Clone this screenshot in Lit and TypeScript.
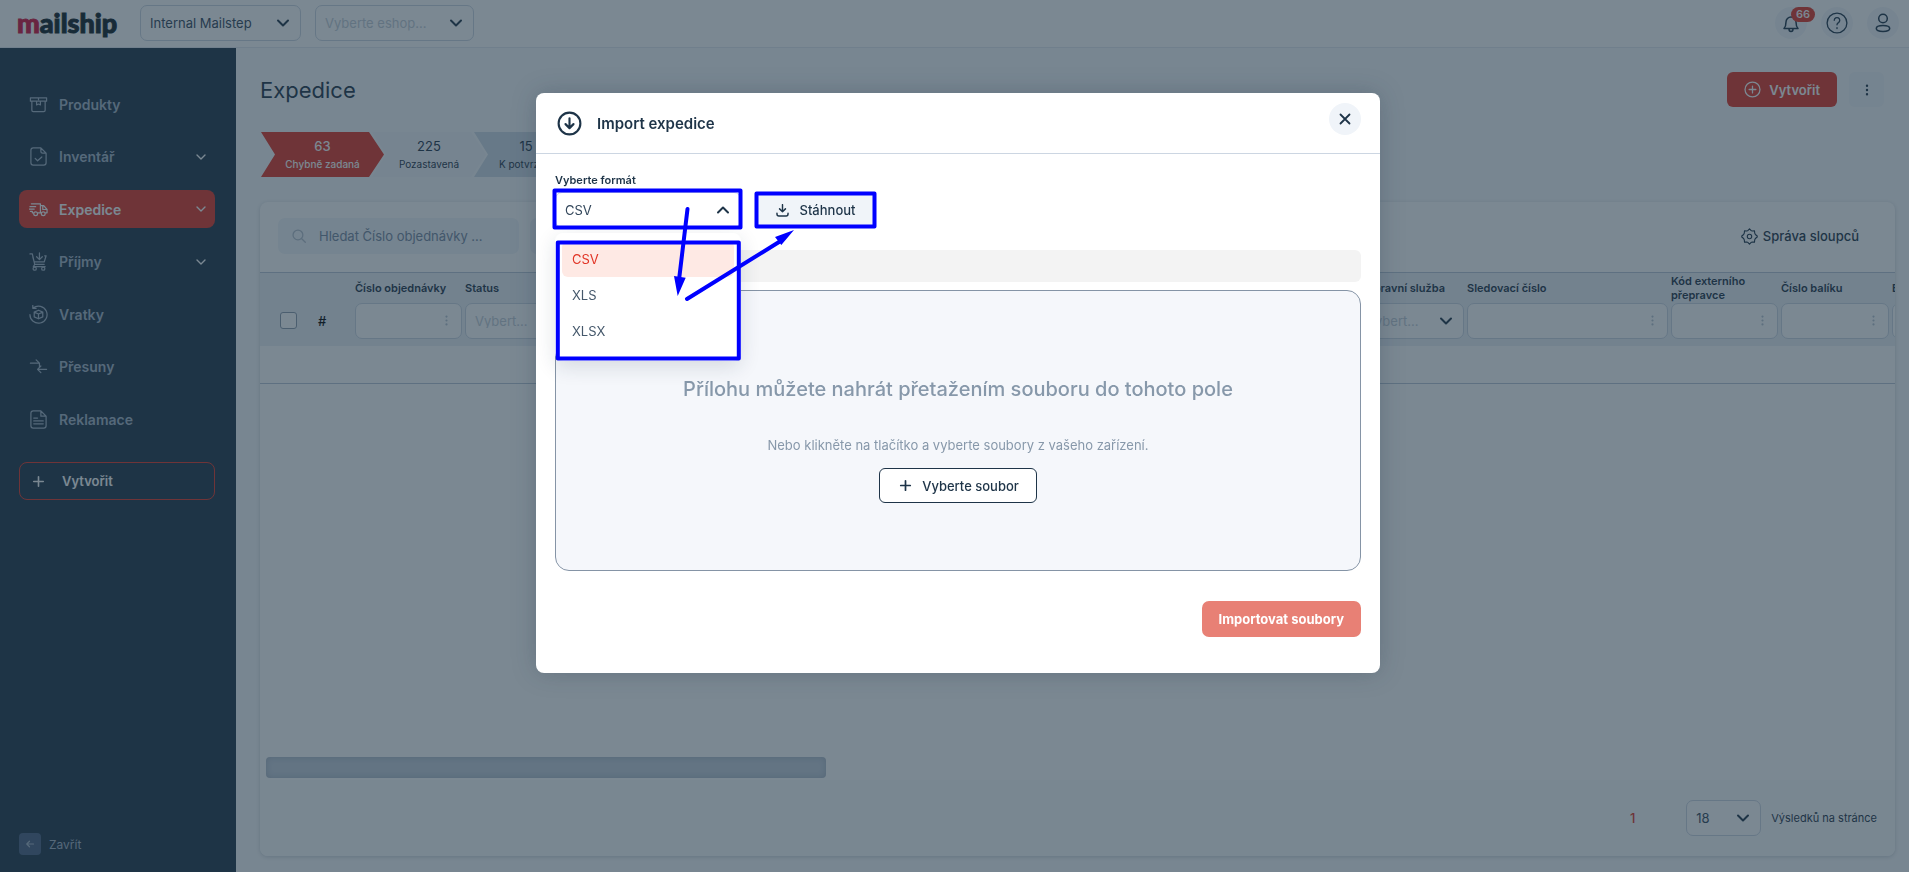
import { LitElement, html, css, svg, nothing } from "lit";
import { customElement, property } from "lit/decorators.js";
import { classMap } from "lit/directives/class-map.js";

const glyphs: Record<string, unknown> = {
  box: svg`<path d="M1.5 3h17v3.5h-17zM3 6.500v9.500a1.500 1.500 0 0 0 1.500 1.500h11a1.500 1.500 0 0 0 1.500-1.500V6.500M10 3v2M8 6.500v4l2-1 2 1v-4"/>`,
  check: svg`<path d="M12.500 1H4.500A2.500 2.500 0 0 0 2 3.500v13A2.500 2.500 0 0 0 4.500 19h11a2.500 2.500 0 0 0 2.500-2.500V6.500zM12.500 1v3.500a2 2 0 0 0 2 2H18M6.500 12l2.500 2.500 4.500-4"/>`,
  truck: svg`<path d="M2.500 4H12v9.500H9.500M12 6h3.500l3.500 4v3.500h-1.500M13 13.500h-1M1 7h6M.5 9.500h5M1.500 12h2v1.500h1M14.500 6v4H19"/><circle cx="7" cy="14.500" r="2"/><circle cx="15" cy="14.500" r="2"/>`,
  cart: svg`<path d="M1 2h2.500l2.500 11h10M4 5l1.500 5.500h10.500L18 4h-1.500M11 1v6.500M8 5l3 3 3-3M6 13l-1.500 2.500H17"/><circle cx="6" cy="17.500" r="1.700"/><circle cx="15" cy="17.500" r="1.700"/>`,
  returns: svg`<path d="M4.500 3A9 9 0 1 1 1 10M4 .5v3h3.500M10 5.500l4.500 2v5L10 14.500l-4.500-2v-5zM5.500 7.500L10 9.500l4.500-2M10 9.500v5"/>`,
  moves: svg`<path d="M1.500 6.500h9M7.500 3l3.500 3.500V10M18.500 13H9.500M12.500 9.500L9 13l3.500 3.500"/>`,
  doc: svg`<path d="M12.500 1H4.500A2.500 2.500 0 0 0 2 3.500v13A2.500 2.500 0 0 0 4.500 19h11a2.500 2.500 0 0 0 2.500-2.500V6.500zM12.500 1v5.500H18M5 8.500h4M5 11.500h10M5 14.500h10"/>`,
  down: svg`<path d="M5 7.500l5 5 5-5"/>`,
  up: svg`<path d="M5 12.500L10 7.500l5 5"/>`,
  plus: svg`<path d="M10 5v10M5 10h10"/>`,
  left: svg`<path d="M17 10H4M9 4.500L3.500 10 9 15.500"/>`,
  bell: svg`<path d="M3 15.500c1.500-1.500 2-3 2-6.500a5 5 0 0 1 10 0c0 3.500.5 5 2 6.500zM8 16a2 2.500 0 0 0 4 0"/>`,
  help: svg`<circle cx="10" cy="10" r="9"/><path d="M7.500 7.500a2.500 2.500 0 1 1 3.800 2.200c-.9.500-1.300 1-1.300 2M10 14.200v.8"/>`,
  user: svg`<circle cx="10" cy="5.500" r="4.300"/><ellipse cx="10" cy="15.500" rx="6.700" ry="2.900"/>`,
  dots: svg`<path d="M10 4v.01M10 10v.01M10 16v.01" stroke-width="3.400"/>`,
  addRound: svg`<circle cx="10" cy="10" r="8.800"/><path d="M10 6v8M6 10h8"/>`,
  search: svg`<circle cx="8.500" cy="8.500" r="7"/><path d="M13.500 13.500l5.500 5.500"/>`,
  gear: svg`<circle cx="10" cy="10" r="2.600"/><path d="M8.300 2.900L10 .9l1.700 2 1.600.7 2.600-.2.200 2.600.8 1.600 2.200 1.800v1.200l-2.200 1.800-.8 1.600-.2 2.600-2.600-.2-1.600.7L10 19.100l-1.700-2-1.600-.7-2.600.2-.2-2.600-.8-1.600-2.200-1.800V9.400l2.200-1.800.8-1.600.2-2.600 2.600.2z"/>`,
  import: svg`<circle cx="10" cy="10" r="8.700"/><path d="M10 5.800v7.500M6.800 10.500L10 13.700l3.200-3.200"/>`,
  close: svg`<path d="M5 5l10 10M15 5L5 15"/>`,
  download: svg`<path d="M10 1v11M5.500 7.500L10 12l4.500-4.500M1.500 14v1.500a3 3 0 0 0 3 3h11a3 3 0 0 0 3-3V14"/>`,
};

const icon = (name: string, size = 16, weight = 1.5) => html`<svg
  width=${size} height=${size} viewBox="0 0 20 20" fill="none" stroke="currentColor"
  stroke-width=${weight} stroke-linecap="round" stroke-linejoin="round" aria-hidden="true"
>${glyphs[name]}</svg>`;

const base = css`
  * { box-sizing: border-box; }
  :host { font-family: Inter, "Noto Sans", sans-serif; font-size: 13px; color: #1e3448; }
  svg { display: block; flex: none; }
  button, input, select { font: inherit; color: inherit; margin: 0; }
  button { cursor: pointer; }
`;

@customElement("ms-select")
class MsSelect extends LitElement {
  @property() label = "";
  @property() value = "";
  @property({ type: Boolean }) hint = false;
  @property({ type: Boolean }) open = false;
  static styles = [base, css`
    :host { display: block; }
    .wrap { display: grid; align-items: center; }
    .wrap > * { grid-area: 1 / 1; }
    select {
      appearance: none; width: 100%; height: 36px; padding: 0 30px 0 9px; background: #fff;
      border: 1px solid #ccd6e2; border-radius: 7px; text-overflow: ellipsis; outline: none;
      color: #33475b;
    }
    .hint { color: #c3ccd6; }
    .mark { justify-self: end; margin-right: 8px; pointer-events: none; }
  `];
  render() {
    return html`<div class="wrap">
      <select class=${classMap({ hint: this.hint })} aria-label=${this.label}><option>${this.value}</option></select>
      <span class="mark">${icon(this.open ? "up" : "down", 20, 2)}</span>
    </div>`;
  }
}

@customElement("ms-topbar")
class MsTopbar extends LitElement {
  static styles = [base, css`
    :host { display: flex; align-items: center; height: 48px; padding: 0 10px 1px 17px; background: #fff; border-bottom: 1px solid #e4e9f0; }
    .logo { width: 123px; font: 900 27px/38px Lato, sans-serif; -webkit-text-stroke: 1px; text-decoration: none; color: #101d26; }
    .logo b { font-weight: inherit; color: #d3103a; }
    .org { width: 161px; margin-right: 14px; }
    .shop { width: 159px; }
    .tools { display: flex; gap: 14px; margin-left: auto; }
    .tool { position: relative; display: grid; place-items: center; width: 32px; height: 32px; padding: 0; border: 0; border-radius: 50%; background: #f3f6fb; }
    .badge { position: absolute; top: 0; left: 16px; width: 24px; border-radius: 8px; background: #e13425; color: #fff; font-size: 11px; font-weight: 600; line-height: 15px; }
  `];
  render() {
    return html`
      <a class="logo" href="#"><b>m</b>ailship</a>
      <ms-select class="org" label="Organizace" value="Internal Mailstep"></ms-select>
      <ms-select class="shop" label="Eshop" value="Vyberte eshop..." hint></ms-select>
      <div class="tools">
        <button class="tool" aria-label="Upozornění">${icon("bell", 20, 1.5)}<span class="badge">66</span></button>
        <button class="tool" aria-label="Nápověda">${icon("help", 22, 1.2)}</button>
        <button class="tool" aria-label="Profil">${icon("user", 20, 1.5)}</button>
      </div>`;
  }
}

const menu = [
  { name: "Produkty", glyph: "box" },
  { name: "Inventář", glyph: "check", sub: true },
  { name: "Expedice", glyph: "truck", sub: true, active: true },
  { name: "Příjmy", glyph: "cart", sub: true },
  { name: "Vratky", glyph: "returns" },
  { name: "Přesuny", glyph: "moves" },
  { name: "Reklamace", glyph: "doc" },
];

@customElement("ms-sidebar")
class MsSidebar extends LitElement {
  static styles = [base, css`
    :host { display: flex; flex-direction: column; padding: 37px 21px 17px 19px; background: #1e3448; color: #a3b3c4; font-weight: 600; }
    nav { display: flex; flex-direction: column; justify-content: space-between; min-height: 353px; }
    .item { display: flex; align-items: center; gap: 11px; height: 38px; padding: 0 6px 0 10px; border-radius: 8px; color: inherit; font-size: 14px; text-decoration: none; }
    .item .mark { margin-left: auto; color: #fff; }
    .active { background: #e13425; color: #fff; }
    .create { display: flex; align-items: center; gap: 14px; height: 38px; margin-top: 24px; padding: 0 9px; border: 1px solid #e13425; border-radius: 8px; background: none; color: #fff; font-weight: 600; }
    .shut { display: flex; align-items: center; gap: 8px; margin-top: auto; padding: 0; border: 0; background: none; font-size: 12px; font-weight: 400; }
    .sq { display: grid; place-items: center; width: 22px; height: 22px; border-radius: 4px; background: #4a5f80; }
  `];
  render() {
    return html`
      <nav>${menu.map((m) => html`<a href="#" class=${classMap({ item: true, active: !!m.active })}>
        ${icon(m.glyph, 19, 1.3)}<span>${m.name}</span>${m.sub ? html`<span class="mark">${icon("down", 16, 1.7)}</span>` : nothing}</a>`)}
      </nav>
      <button class="create">${icon("plus", 19, 1.7)}Vytvořit</button>
      <button class="shut"><span class="sq">${icon("left", 10, 2.4)}</span>Zavřít</button>`;
  }
}

type Column = { name: string; width: number; kind?: "select" };
const columns: Column[] = [
  { name: "Číslo objednávky", width: 110 },
  { name: "Status", width: 310, kind: "select" },
  { name: "Jméno příjemce", width: 200 },
  { name: "Příjmení příjemce", width: 200 },
  { name: "Firma", width: 181 },
  { name: "Přepravní služba", width: 111, kind: "select" },
  { name: "Sledovací číslo", width: 204 },
  { name: "Kód externího přepravce", width: 110 },
  { name: "Číslo balíku", width: 111 },
  { name: "Eshop", width: 110 },
];

@customElement("ms-orders")
class MsOrders extends LitElement {
  static styles = [base, css`
    :host { display: flex; flex-direction: column; flex: 1; min-width: 0; overflow: hidden; background: #fff; border-radius: 8px; box-shadow: 0 1px 4px rgba(30, 52, 72, 0.2); }
    .bar { display: flex; align-items: center; gap: 11px; height: 70px; padding: 0 36px 2px 18px; }
    .search { display: flex; align-items: center; gap: 13px; width: 241px; height: 36px; padding: 0 14px; border-radius: 7px; background: #f0f4f9; color: #b4bfcc; }
    .search input { flex: 1; min-width: 0; padding: 0; border: 0; background: none; outline: none; }
    .search input::placeholder { color: #7588a0; opacity: 1; }
    .filter { width: 120px; height: 36px; border: 0; border-radius: 7px; background: #f0f4f9; }
    .manage { display: flex; align-items: center; gap: 5px; margin-left: auto; padding: 0; border: 0; background: none; font-weight: 500; }
    .scroll { overflow: hidden; }
    table { table-layout: fixed; border-collapse: collapse; width: max(100%, 1742px); }
    .c-check { width: 46px; } .c-num { width: 49px; }
    thead tr { background: #ebf0f6; }
    th { padding: 0 3px 0 0; font-size: 11px; font-weight: 600; line-height: 14px; text-align: left; }
    .labels { border-top: 1px solid #b9c6d5; }
    .labels th { height: 30px; }
    .filters th { height: 43px; vertical-align: top; font-size: 13px; font-weight: 400; }
    .tick { appearance: none; display: block; width: 17px; height: 17px; margin: 9px 0 0 20px; border: 1px solid #8a99ab; border-radius: 3px; background: #fff; }
    .filters .hash { padding: 11px 0 0 12px; font-weight: 500; color: #000; }
    .box { display: flex; align-items: center; height: 36px; padding-right: 8px; border: 1px solid #ccd6e2; border-radius: 7px; background: #fff; color: #b7c3d0; }
    .box input { flex: 1; min-width: 0; border: 0; background: none; outline: none; }
    td { height: 38px; border-bottom: 1px solid #b9c6d5; }
    .track { margin: auto 0 2px; padding: 0 6px; }
    .thumb { width: 560px; height: 21px; border-radius: 4px; background: #c4cedb; box-shadow: inset 0 0 6px rgba(30, 52, 72, 0.2); }
    .foot { display: flex; align-items: center; height: 76px; padding: 0 18px 1px; justify-content: flex-end; background: #fbfcfd; }
    .page { margin-right: 51px; color: #e13425; text-decoration: none; font-weight: 500; }
    .size { width: 75px; margin-right: 10px; }
    .note { font-size: 11px; }
  `];
  render() {
    return html`
      <div class="bar">
        <label class="search">${icon("search", 14, 1.8)}<input placeholder="Hledat Číslo objednávky ..." aria-label="Hledat" /></label>
        <button class="filter" aria-label="Filtr"></button>
        <button class="manage">${icon("gear", 17, 1.3)}Správa sloupců</button>
      </div>
      <div class="scroll"><table>
        <colgroup><col class="c-check" /><col class="c-num" />${columns.map((c) => html`<col style="width:${c.width}px" />`)}</colgroup>
        <thead>
          <tr class="labels"><th></th><th></th>${columns.map((c) => html`<th>${c.name}</th>`)}</tr>
          <tr class="filters">
            <th><input class="tick" type="checkbox" aria-label="Vybrat vše" /></th>
            <th class="hash">#</th>
            ${columns.map((c) => html`<th>${c.kind
              ? html`<ms-select label=${c.name} value="Vybert..." hint></ms-select>`
              : html`<span class="box"><input aria-label=${c.name} />${icon("dots", 13, 2)}</span>`}</th>`)}
          </tr>
        </thead>
        <tbody><tr><td colspan=${columns.length + 2}></td></tr></tbody>
      </table></div>
      <div class="track"><div class="thumb"></div></div>
      <div class="foot">
        <a class="page" href="#">1</a>
        <ms-select class="size" label="Výsledků na stránce" value="18"></ms-select>
        <span class="note">Výsledků na stránce</span>
      </div>`;
  }
}

@customElement("ms-import-dialog")
class MsImportDialog extends LitElement {
  static styles = [base, css`
    :host { position: relative; display: block; width: 844px; max-width: 100%; padding-bottom: 36px; border-radius: 8px; background: #fff; box-shadow: 0 0 24px rgba(30, 52, 72, 0.25); }
    header { display: flex; align-items: center; gap: 15px; height: 61px; padding: 0 19px; border-bottom: 1px solid #ccd6e2; }
    header svg { margin-left: 2px; }
    h2 { margin: 0; font-size: 15px; font-weight: 600; }
    .close { display: grid; place-items: center; align-self: flex-start; width: 32px; height: 32px; margin: 10px 0 0 auto; padding: 0; border: 0; border-radius: 50%; background: #f0f4f9; }
    .close svg { margin: 0; }
    .body { padding: 18px 19px 0; }
    .label { display: block; font-size: 11px; font-weight: 600; line-height: 16px; }
    .row { display: flex; align-items: center; gap: 16px; margin-top: 4px; }
    .field { position: relative; width: 186px; }
    .menu { position: absolute; z-index: 1; top: 41px; left: 0; right: 0; margin: 0; padding: 8px 7px 12px; border-radius: 8px; background: #fff; list-style: none; box-shadow: 0 6px 20px rgba(30, 52, 72, 0.14); }
    .menu li { height: 36px; padding: 0 10px; border-radius: 6px; line-height: 36px; color: #45586b; }
    .menu .on { background: #fee9e4; color: #e13425; }
    .get { display: flex; align-items: center; justify-content: center; gap: 10px; width: 118px; height: 34px; padding: 0; border: 0; background: #f0f4f9; font-weight: 500; }
    .strip { height: 32px; margin-top: 22px; border-radius: 6px; background: #f3f3f3; }
    .drop { display: flex; flex-direction: column; align-items: center; height: 281px; margin-top: 8px; padding-top: 84px; border: 1px solid #8594a6; border-radius: 14px; background: #f5f7fb; color: #8798aa; }
    .lead { margin: 0; font-size: 20px; font-weight: 500; line-height: 28px; }
    .sub { margin: 32px 0 0; line-height: 20px; }
    .pick { display: flex; align-items: center; gap: 7px; height: 35px; margin-top: 13px; padding: 0 17px 0 16px; border: 1px solid #1e3448; border-radius: 6px; background: #fff; color: #1e3448; font-weight: 500; }
    .actions { display: flex; justify-content: flex-end; margin-top: 30px; }
    .go { height: 36px; padding: 0 17px; border: 0; border-radius: 7px; background: #e88075; color: #fff; font-weight: 700; }
    .marks { position: absolute; z-index: 2; top: 0; left: 0; pointer-events: none; }
  `];
  render() {
    return html`
      <header>${icon("import", 25, 1.7)}<h2>Import expedice</h2>
        <button class="close" aria-label="Zavřít">${icon("close", 18, 2)}</button></header>
      <div class="body">
        <span class="label">Vyberte formát</span>
        <div class="row">
          <div class="field">
            <ms-select label="Vyberte formát" value="CSV" open></ms-select>
            <ul class="menu" role="listbox" aria-label="Formáty">
              <li class="on" role="option" aria-selected="true">CSV</li>
              <li role="option">XLS</li>
              <li role="option">XLSX</li>
            </ul>
          </div>
          <button class="get">${icon("download", 13, 2.2)}Stáhnout</button>
        </div>
        <div class="strip"></div>
        <div class="drop">
          <p class="lead">Přílohu můžete nahrát přetažením souboru do tohoto pole</p>
          <p class="sub">Nebo klikněte na tlačítko a vyberte soubory z vašeho zařízení.</p>
          <button class="pick">${icon("plus", 19, 1.8)}Vyberte soubor</button>
        </div>
        <div class="actions"><button class="go">Importovat soubory</button></div>
      </div>
      <svg class="marks" width="360" height="280" viewBox="0 0 360 280" fill="none" stroke="#00f" stroke-width="4" stroke-linecap="round" stroke-linejoin="round" aria-hidden="true">
        <rect x="18.500" y="97.500" width="186" height="37" />
        <rect x="220.500" y="100.500" width="118" height="33" />
        <rect x="21.800" y="149.500" width="181" height="116" />
        <path d="M151.500 116L143 187M151 206L243 149" />
        <path d="M138 183l11.700 1.700L141.700 203zM239 144L258 137L245.300 152z" fill="#00f" stroke="none" />
      </svg>`;
  }
}

const stages = [
  { count: 63, name: "Chybně zadaná", tone: "red" },
  { count: 225, name: "Pozastavená", tone: "pale" },
  { count: 15, name: "K potvrzení", tone: "mid" },
];

@customElement("app-root")
class AppRoot extends LitElement {
  static styles = [base, css`
    :host { display: grid; grid-template: auto 1fr / 236px minmax(0, 1fr); min-height: 100vh; background: #f8fafc; }
    ms-topbar { grid-column: 1 / -1; }
    main { display: flex; flex-direction: column; min-width: 0; padding: 24px 14px 16px 24px; }
    .head { display: flex; align-items: center; gap: 12px; height: 35px; padding: 0 11px 0 0; }
    h1 { flex: 1; margin: 0; font-size: 22px; font-weight: 400; }
    .add { display: flex; align-items: center; gap: 8px; height: 35px; padding: 0 17px; border: 0; border-radius: 6px; background: #e13425; color: #fff; font-weight: 600; }
    .more { display: grid; place-items: center; width: 35px; height: 35px; padding: 0; border: 0; border-radius: 6px; background: #f0f4f9; }
    .stages { display: flex; margin: 25px 0; padding: 0 1px; }
    .stage { display: flex; flex-direction: column; align-items: center; justify-content: center; gap: 3px; height: 45px; margin-right: -12px; border: 0; padding: 0; clip-path: polygon(0 0, calc(100% - 15px) 0, 100% 50%, calc(100% - 15px) 100%, 0 100%, 14px 50%); }
    .red { width: 123px; background: #e13425; color: #fff; font-weight: 500; }
    .pale { width: 114px; background: #f3f6fb; }
    .mid { width: 104px; background: #cfdae6; }
    .count { font-size: 13px; line-height: 16px; }
    .what { font-size: 10px; line-height: 14px; }
    .shade { position: fixed; inset: 0; display: flex; align-items: flex-start; justify-content: center; padding: 93px 0 0 7px; background: rgba(30, 52, 70, 0.59); }
  `];
  render() {
    return html`
      <ms-topbar></ms-topbar>
      <ms-sidebar></ms-sidebar>
      <main>
        <div class="head">
          <h1>Expedice</h1>
          <button class="add">${icon("addRound", 17, 1.5)}Vytvořit</button>
          <button class="more" aria-label="Další akce">${icon("dots", 14, 2)}</button>
        </div>
        <div class="stages">${stages.map((s) => html`<button class="stage ${s.tone}"><span class="count">${s.count}</span><span class="what">${s.name}</span></button>`)}</div>
        <ms-orders></ms-orders>
      </main>
      <div class="shade"><ms-import-dialog role="dialog" aria-label="Import expedice"></ms-import-dialog></div>`;
  }
}
